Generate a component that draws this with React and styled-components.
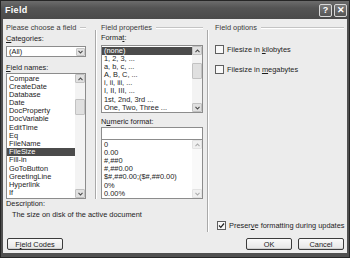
import React from "react";
import styled, { createGlobalStyle } from "styled-components";

const GlobalStyle = createGlobalStyle`
  html, body {
    margin: 0;
    padding: 0;
    background: #ffffff;
  }
`;

const Window = styled.div`
  width: 350px;
  height: 258px;
  box-sizing: border-box;
  background: #505050;
  border: 1px solid #262626;
  display: flex;
  flex-direction: column;
  font-family: "Liberation Sans", Arial, sans-serif;
  font-size: 7.4px;
  color: #1c1c1c;
`;

const TitleBar = styled.div`
  height: 18px;
  display: flex;
  align-items: center;
  padding: 0 2px 0 4px;
  background: linear-gradient(#6c6c6c, #545454 40%, #4a4a4a);
`;

const Title = styled.div`
  flex: 1;
  color: #ffffff;
  font-weight: bold;
  font-size: 9px;
  letter-spacing: 0.3px;
`;

const CapButton = styled.div`
  width: 11px;
  height: 11px;
  margin-left: 2px;
  border: 1px solid #d8d8d8;
  border-radius: 2px;
  background: linear-gradient(#7a7a7a, #555555);
  color: #ffffff;
  font-weight: bold;
  font-size: 9px;
  display: flex;
  align-items: center;
  justify-content: center;
`;

const Client = styled.div`
  flex: 1;
  margin: 0 2px 4px 2px;
  background: #ececec;
  padding: 5px 3px 3px 3px;
  display: flex;
  flex-direction: column;
`;

const Groups = styled.div`
  display: grid;
  grid-template-columns: 80px auto 102px auto 1fr;
  grid-template-rows: 175px 33px;
`;

const Column = styled.div`
  display: flex;
  flex-direction: column;
  grid-row: ${(p) => p.$rows || "1"};
  grid-column: ${(p) => p.$col};
`;

const Divider = styled.div`
  grid-column: ${(p) => p.$col};
  grid-row: ${(p) => p.$rows};
  width: 1px;
  margin: 6px ${(p) => p.$r}px 0 ${(p) => p.$l}px;
  background: #a9a9a9;
  border-right: 1px solid #ffffff;
`;

const Heading = styled.div`
  display: flex;
  align-items: center;
  gap: 4px;
  height: 8px;
  line-height: 8px;
  white-space: nowrap;
  color: #3a3a3a;
  &::after {
    content: "";
    flex: 1;
    height: 1px;
    background: #c4c4c4;
    border-bottom: 1px solid #ffffff;
  }
`;

const Label = styled.div`
  height: 8px;
  line-height: 8px;
  margin-top: ${(p) => p.$top || 0}px;
  white-space: nowrap;
`;

const U = styled.span`
  text-decoration: underline;
`;

const Combo = styled.div`
  height: 11px;
  margin-top: 3px;
  box-sizing: border-box;
  border: 1px solid #8c8c8c;
  background: #ffffff;
  display: flex;
  align-items: center;
  padding-left: 2px;
  span {
    flex: 1;
  }
`;

const DropButton = styled.div`
  width: 9px;
  height: 8px;
  margin-right: 0.5px;
  background: #e2e2e2;
  border: 1px solid #c6c6c6;
  border-radius: 1px;
  box-sizing: border-box;
  display: flex;
  align-items: center;
  justify-content: center;
`;

const ListFrame = styled.div`
  height: ${(p) => p.$h}px;
  margin-top: ${(p) => p.$top || 0}px;
  box-sizing: border-box;
  border: 1px solid #8c8c8c;
  background: #ffffff;
  display: flex;
`;

const Items = styled.div`
  flex: 1;
  padding: 0.5px 0 0 0;
  overflow: hidden;
`;

const Item = styled.div`
  height: 8.2px;
  line-height: 8.2px;
  padding-left: 2px;
  white-space: nowrap;
  background: ${(p) => (p.$selected ? "#4b4b4b" : "transparent")};
  color: ${(p) => (p.$selected ? "#ffffff" : "#1c1c1c")};
`;

const ScrollBar = styled.div`
  width: 10px;
  display: flex;
  flex-direction: column;
  background: #f3f3f3;
  opacity: ${(p) => (p.$disabled ? 0.45 : 1)};
`;

const ScrollArrow = styled.div`
  height: 9px;
  box-sizing: border-box;
  background: #e0e0e0;
  border: 1px solid #c2c2c2;
  border-radius: 1px;
  display: flex;
  align-items: center;
  justify-content: center;
`;

const Track = styled.div`
  flex: 1;
  display: flex;
  flex-direction: column;
`;

const Thumb = styled.div`
  margin-top: ${(p) => p.$top}px;
  height: ${(p) => p.$h}px;
  box-sizing: border-box;
  background: #e0e0e0;
  border: 1px solid #c2c2c2;
  border-radius: 1px;
`;

const TextBox = styled.div`
  height: 13px;
  margin-top: 1px;
  box-sizing: border-box;
  border: 1px solid #8c8c8c;
  border-bottom: none;
  background: #ffffff;
`;

const Description = styled.div`
  grid-column: 1 / 4;
  grid-row: 2;
  display: flex;
  flex-direction: column;
  padding-top: 1px;
`;

const DescText = styled.div`
  margin-top: 3px;
  padding-left: 6px;
  height: 8px;
  line-height: 8px;
`;

const CheckRow = styled.label`
  display: flex;
  align-items: center;
  gap: 3px;
  height: 9px;
  margin-top: ${(p) => p.$top || 0}px;
  padding-left: ${(p) => p.$left || 0}px;
  white-space: nowrap;
`;

const Box = styled.span`
  width: 9px;
  height: 9px;
  box-sizing: border-box;
  border: 1px solid #5e5e5e;
  background: #f8f8f8;
  display: flex;
  align-items: center;
  justify-content: center;
`;

const Spacer = styled.div`
  flex: ${(p) => (p.$fixed ? `0 0 ${p.$fixed}px` : 1)};
`;

const ButtonRow = styled.div`
  display: flex;
  gap: 6px;
  margin-top: 6px;
`;

const Button = styled.div`
  width: ${(p) => p.$w}px;
  height: 12px;
  box-sizing: border-box;
  border: 1px solid #3c3c3c;
  border-radius: 2px;
  background: linear-gradient(#fafafa, #e6e6e6);
  box-shadow: inset 0 -1px 0 #cfcfcf;
  display: flex;
  align-items: center;
  justify-content: center;
  margin-left: ${(p) => p.$ml || 0}px;
`;

const Chevron = ({ up }) => (
  <svg width="5" height="4" viewBox="0 0 5 4">
    <polyline
      points={up ? "0.5,3.2 2.5,1 4.5,3.2" : "0.5,0.8 2.5,3 4.5,0.8"}
      fill="none"
      stroke="#4a4a4a"
      strokeWidth="1.1"
    />
  </svg>
);

const Check = () => (
  <svg width="7" height="7" viewBox="0 0 7 7">
    <polyline points="1,3.5 2.8,5.3 6,1.5" fill="none" stroke="#222" strokeWidth="1.2" />
  </svg>
);

function ListBox({ items, selected, height, top, thumb, disabled }) {
  return (
    <ListFrame $h={height} $top={top}>
      <Items>
        {items.map((it, i) => (
          <Item key={i} $selected={i === selected}>
            {it}
          </Item>
        ))}
      </Items>
      <ScrollBar $disabled={disabled}>
        <ScrollArrow>
          <Chevron up />
        </ScrollArrow>
        <Track>{thumb && <Thumb $top={thumb[0]} $h={thumb[1]} />}</Track>
        <ScrollArrow>
          <Chevron />
        </ScrollArrow>
      </ScrollBar>
    </ListFrame>
  );
}

const fieldNames = [
  "Compare", "CreateDate", "Database", "Date", "DocProperty", "DocVariable",
  "EditTime", "Eq", "FileName", "FileSize", "Fill-in", "GoToButton",
  "GreetingLine", "Hyperlink", "If",
];

const formats = [
  "(none)", "1, 2, 3, ...", "a, b, c, ...", "A, B, C, ...", "i, ii, iii, ...",
  "I, II, III, ...", "1st, 2nd, 3rd ...", "One, Two, Three ...",
];

const numeric = [
  "0", "0.00", "#,##0", "#,##0.00", "$#,##0.00;($#,##0.00)", "0%", "0.00%",
];

export default function App() {
  return (
    <>
      <GlobalStyle />
      <Window>
        <TitleBar>
          <Title>Field</Title>
          <CapButton>?</CapButton>
          <CapButton>✕</CapButton>
        </TitleBar>
        <Client>
          <Groups>
            <Column $col="1">
              <Heading>Please choose a field</Heading>
              <Label $top={3}>
                <U>C</U>ategories:
              </Label>
              <Combo>
                <span>(All)</span>
                <DropButton>
                  <Chevron />
                </DropButton>
              </Combo>
              <Label $top={7}>
                <U>F</U>ield names:
              </Label>
              <ListBox items={fieldNames} selected={9} height={126} top={1} thumb={[16, 16]} />
            </Column>
            <Divider $col="2" $rows="1" $l={9} $r={4} />
            <Column $col="3">
              <Heading>Field properties</Heading>
              <Label $top={2}>
                Forma<U>t</U>:
              </Label>
              <ListBox items={formats} selected={0} height={68} top={3} thumb={[8, 16]} />
              <Label $top={5}>
                N<U>u</U>meric format:
              </Label>
              <TextBox />
              <ListBox items={numeric} height={60} disabled />
            </Column>
            <Divider $col="4" $rows="1 / 3" $l={4} $r={6} />
            <Column $col="5" $rows="1 / 3">
              <Heading>Field options</Heading>
              <CheckRow $top={13}>
                <Box />
                <span>
                  Filesize in <U>k</U>ilobytes
                </span>
              </CheckRow>
              <CheckRow $top={11}>
                <Box />
                <span>
                  Filesize in <U>m</U>egabytes
                </span>
              </CheckRow>
              <Spacer />
              <CheckRow $left={2}>
                <Box>
                  <Check />
                </Box>
                <span>
                  Preser<U>v</U>e formatting during updates
                </span>
              </CheckRow>
              <Spacer $fixed={2} />
            </Column>
            <Description>
              <Label>Description:</Label>
              <DescText>The size on disk of the active document</DescText>
            </Description>
          </Groups>
          <ButtonRow>
            <Button $w={56} $ml={1}>
              F<U>i</U>eld Codes
            </Button>
            <Spacer />
            <Button $w={46}>OK</Button>
            <Button $w={46}>Cancel</Button>
          </ButtonRow>
        </Client>
      </Window>
    </>
  );
}
